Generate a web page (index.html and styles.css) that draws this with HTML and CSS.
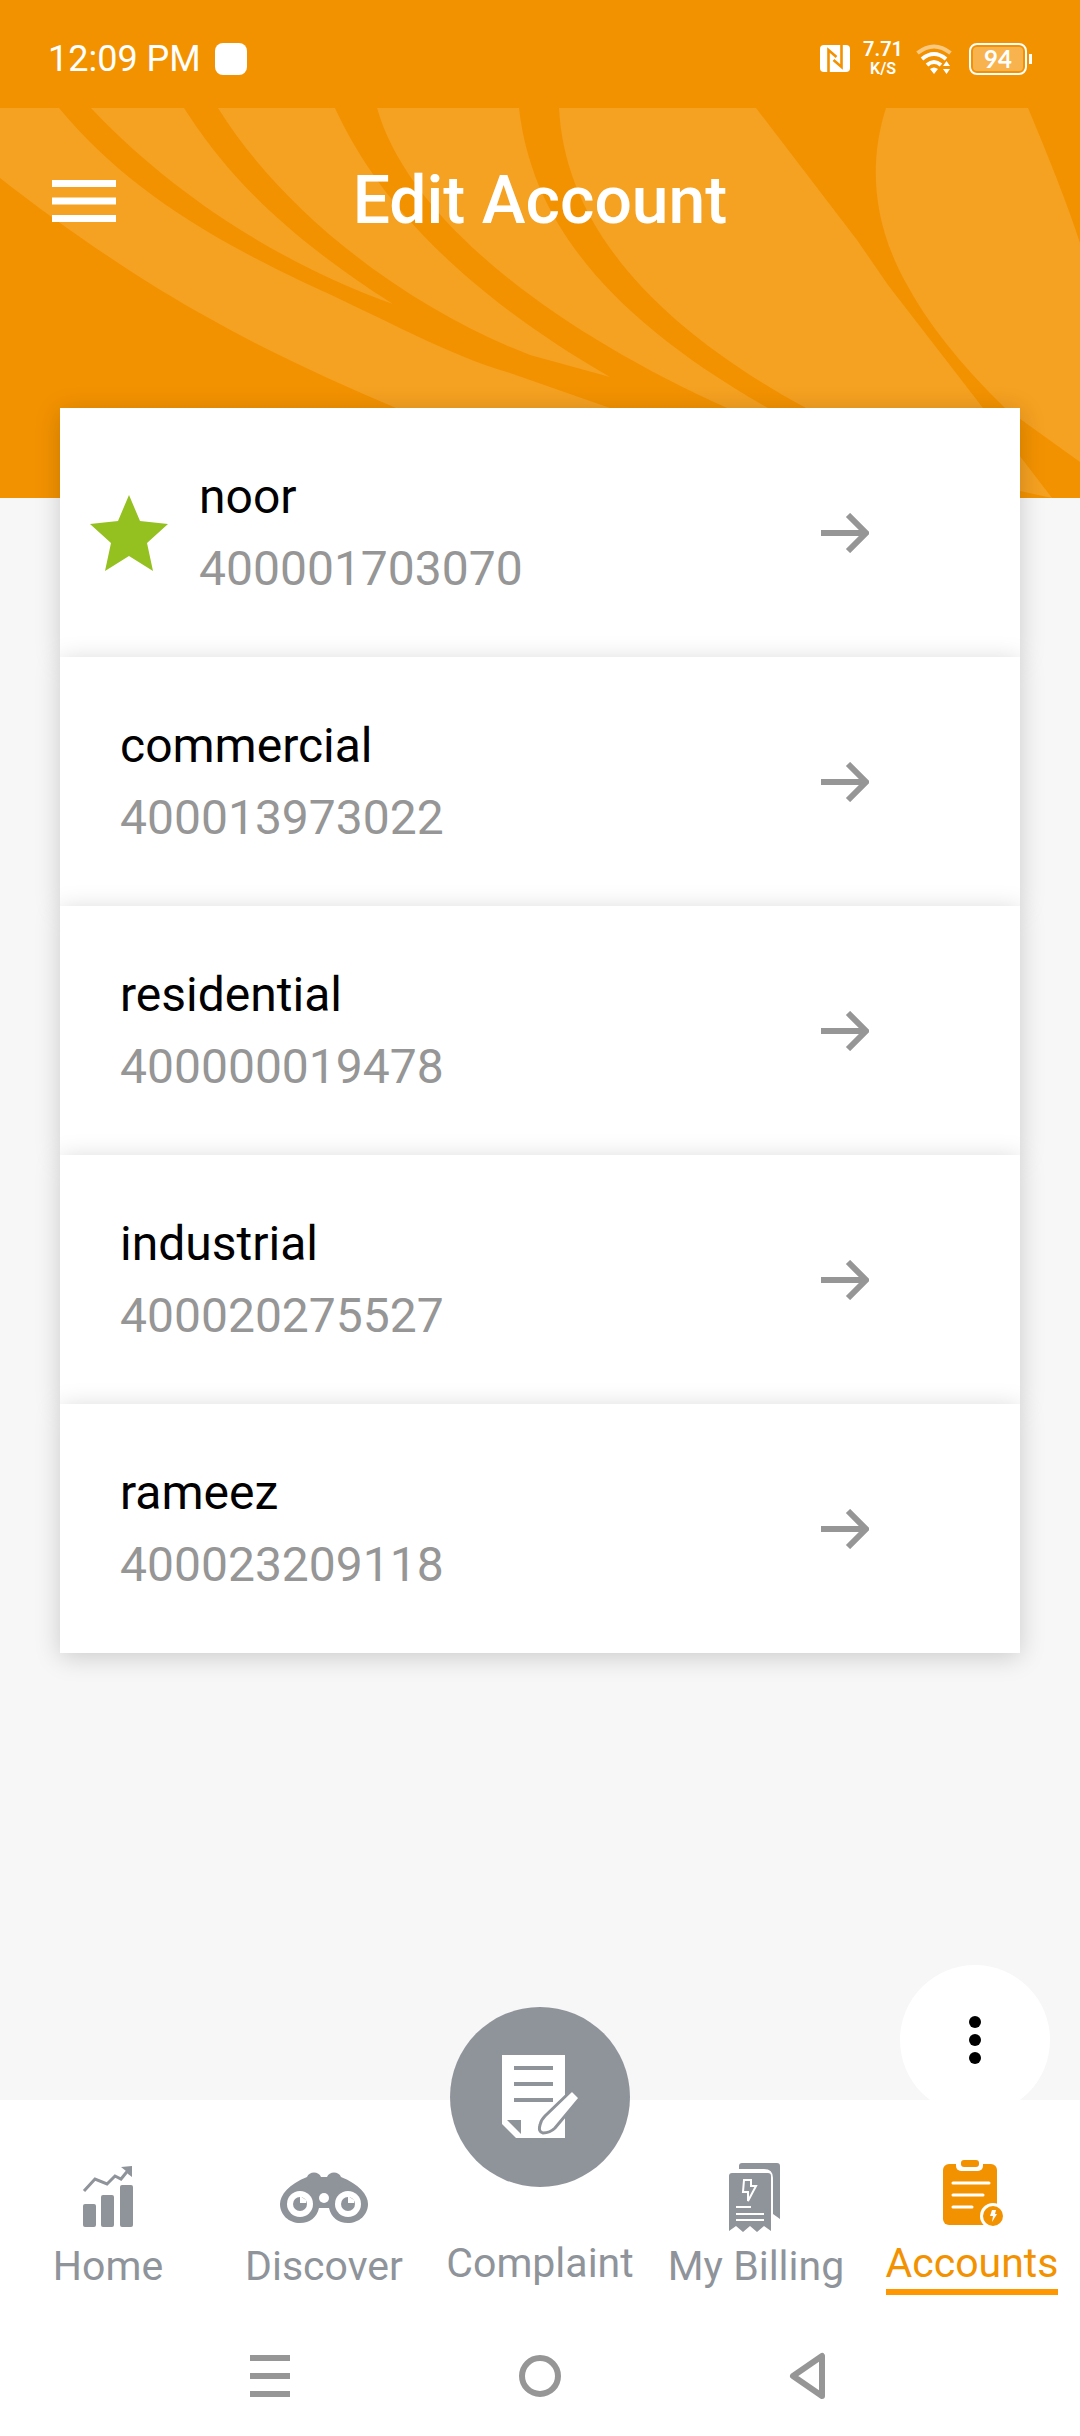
FILE: index.html
```
<!DOCTYPE html>
<html lang="en">
<head>
  <meta charset="UTF-8" />
  <meta name="viewport" content="width=device-width, initial-scale=1.0"/>
  <title>Edit Account</title>
  <link rel="stylesheet" href="styles.css">
</head>
<body>
  <header class="header">
    <!-- Phone status bar -->
    <div class="status-bar">
      <div class="status-left">
        <span class="time">12:09 PM</span>
        <span class="notice"></span>
      </div>
      <div class="status-right">
        <svg class="nfc" width="30" height="27" viewBox="0 0 30 27" aria-hidden="true">
          <rect width="30" height="27" rx="4" fill="#fff"/>
          <path d="M8.500 27V5l8 7M21.500 0v22l-8-7" fill="none" stroke="#f39200" stroke-width="2.600"/>
        </svg>
        <div class="speed"><span>7.71</span><small>K/S</small></div>
        <svg class="wifi" width="36" height="30" viewBox="0 0 36 30" aria-hidden="true">
          <g fill="none" stroke="#fff" stroke-width="4">
            <path d="M1.500 9Q18-4 34.500 9" opacity=".5"/>
            <path d="M6 15Q18 5 30 15"/>
            <path d="M11 21Q18 15 25 21"/>
          </g>
          <path d="M14 25q4-3 8 0l-4 5zM27 22l3.500-5 3.500 5zM27 25h7l-3.500 5z" fill="#fff"/>
        </svg>
        <div class="battery"><span>94</span></div>
      </div>
    </div>

    <div class="hero">
      <svg class="swirls" viewBox="0 0 1080 390" preserveAspectRatio="none" aria-hidden="true">
        <g fill="#f5a121">
          <path d="M0 0H59C115 67 185 118 303 174C385 211 450 248 510 265L610 300H396C340 276 270 245 207 209C150 178 70 125 0 70Z"/>
          <path d="M91 0H184C215 48 265 115 393 196C310 167 190 105 91 0Z"/>
          <path d="M218 0H335C365 65 430 165 610 269L530 247C420 205 290 115 218 0Z"/>
          <path d="M377 0H519C532 115 610 210 768 300H727C560 225 410 115 377 0Z"/>
          <path d="M559 0H756L857 132L888 177L983 300L1052 390L1020 383C900 360 850 325 806 300C650 215 565 115 559 0Z"/>
          <path d="M886 0H1028C1049 50 1067 95 1080 135V354L1005 300Q938 235 906 175C870 110 870 50 886 0Z"/>
        </g>
      </svg>
      <div class="app-bar">
        <button class="menu" type="button" aria-label="Menu">
          <svg width="64" height="42" viewBox="0 0 64 42"><path d="M0 0h64v7H0zM0 17.500h64v7H0zM0 35h64v7H0z" fill="#fff"/></svg>
        </button>
        <h1>Edit Account</h1>
      </div>
    </div>
  </header>

  <main class="content">
    <!-- Account list, the star marks the default account -->
    <ul class="accounts">
      <li>
        <a class="account favourite" href="#noor">
          <svg class="star" width="78" height="76" viewBox="0 0 78 76"><path d="M39 0L50 26 78 29 57 48 63 76 39 61 15 76 21 48 0 29 28 26z" fill="#94c11f"/></svg>
          <span class="details"><span class="name">noor</span><span class="number">400001703070</span></span>
          <svg class="arrow" width="48" height="40" viewBox="0 0 48 40"><path d="M0 20h44M27 2l18 18-18 18" fill="none" stroke="#969696" stroke-width="6"/></svg>
        </a>
      </li>
      <li>
        <a class="account" href="#commercial">
          <span class="details"><span class="name">commercial</span><span class="number">400013973022</span></span>
          <svg class="arrow" width="48" height="40" viewBox="0 0 48 40"><path d="M0 20h44M27 2l18 18-18 18" fill="none" stroke="#969696" stroke-width="6"/></svg>
        </a>
      </li>
      <li>
        <a class="account" href="#residential">
          <span class="details"><span class="name">residential</span><span class="number">400000019478</span></span>
          <svg class="arrow" width="48" height="40" viewBox="0 0 48 40"><path d="M0 20h44M27 2l18 18-18 18" fill="none" stroke="#969696" stroke-width="6"/></svg>
        </a>
      </li>
      <li>
        <a class="account" href="#industrial">
          <span class="details"><span class="name">industrial</span><span class="number">400020275527</span></span>
          <svg class="arrow" width="48" height="40" viewBox="0 0 48 40"><path d="M0 20h44M27 2l18 18-18 18" fill="none" stroke="#969696" stroke-width="6"/></svg>
        </a>
      </li>
      <li>
        <a class="account" href="#rameez">
          <span class="details"><span class="name">rameez</span><span class="number">400023209118</span></span>
          <svg class="arrow" width="48" height="40" viewBox="0 0 48 40"><path d="M0 20h44M27 2l18 18-18 18" fill="none" stroke="#969696" stroke-width="6"/></svg>
        </a>
      </li>
    </ul>
  </main>

  <nav class="tabs">
    <button class="more" type="button" aria-label="More options">
      <svg width="12" height="48" viewBox="0 0 12 48"><circle cx="6" cy="6" r="6"/><circle cx="6" cy="24" r="6"/><circle cx="6" cy="42" r="6"/></svg>
    </button>

    <a class="tab" href="#home">
      <svg width="96" height="72" viewBox="0 0 96 72">
        <g fill="#8f949b">
          <rect x="23" y="44" width="13" height="23" rx="2"/>
          <rect x="41" y="35" width="13" height="32" rx="2"/>
          <rect x="60" y="25" width="13" height="42" rx="2"/>
          <path d="M61 7l11-1v11l-4-3-2-3z"/>
        </g>
        <path d="M24 31L35 19l12 5 8-8 6 3 9-11" fill="none" stroke="#8f949b" stroke-width="3"/>
      </svg>
      <span>Home</span>
    </a>
    <a class="tab" href="#discover">
      <svg width="96" height="72" viewBox="0 0 96 72">
        <path d="M4 44c0-9 9-20 27-27 2-6 12-6 14 0h6c2-6 12-6 14 0 18 7 27 18 27 27 0 11-9 19-20 19-10 0-17-6-19-15H43c-2 9-9 15-19 15C13 63 4 55 4 44z" fill="#8f949b"/>
        <g fill="#fff">
          <circle cx="24" cy="44" r="13"/>
          <circle cx="72" cy="44" r="13"/>
          <circle cx="48" cy="38" r="5"/>
        </g>
        <g fill="#8f949b">
          <circle cx="24" cy="44" r="7"/>
          <circle cx="72" cy="44" r="7"/>
        </g>
        <path d="M24 43v-7l6 4v3zM72 43v-7l6 4v3z" fill="#fff"/>
      </svg>
      <span>Discover</span>
    </a>
    <a class="tab complaint" href="#complaint">
      <span class="bubble">
        <svg width="78" height="84" viewBox="0 0 78 84">
          <path d="M1 0h63v83H15L1 69z" fill="#fff"/>
          <path d="M6 65h14v14z" fill="#8f949b"/>
          <path d="M13 13h39M13 29h39M13 45h39" stroke="#8f949b" stroke-width="4"/>
          <path d="M71 35l8 8-25 30q-5 5-12 5-5-1-3-8 1-5 5-9z" fill="#fff" stroke="#8f949b" stroke-width="3"/>
        </svg>
      </span>
      <span>Complaint</span>
    </a>
    <a class="tab" href="#billing">
      <svg width="96" height="72" viewBox="0 0 96 72">
        <g fill="#8f949b">
          <path d="M31 9V6q0-3 3-3h35q3 0 3 3v53l-7-5V18q0-9-9-9z"/>
          <path d="M21 71V16q0-3 3-3h36q3 0 3 3v55l-7-5-7 6-7-6-7 6-7-6z"/>
        </g>
        <g fill="none" stroke="#fff" stroke-width="2">
          <path d="M36 20h7v6h5l-8 15v-9h-5z"/>
          <path d="M28 47h15M28 54h28M28 60h28"/>
        </g>
      </svg>
      <span>My Billing</span>
    </a>
    <a class="tab active" href="#accounts" aria-current="page">
      <svg width="96" height="72" viewBox="0 0 96 72">
        <rect x="19" y="7" width="54" height="61" rx="6" fill="#f39200"/>
        <rect x="32" y="0" width="27" height="14" rx="5" fill="#fff"/>
        <rect x="37" y="3" width="18" height="7" rx="3" fill="#f39200"/>
        <path d="M29 26h36M29 38h30M29 50h19" stroke="#fff" stroke-width="3" stroke-linecap="round"/>
        <circle cx="69" cy="59" r="13" fill="#fff"/>
        <circle cx="69" cy="59" r="10" fill="#f39200"/>
        <path d="M68 53h4l-1 4h2l-5 8 1-6h-3z" fill="#fff"/>
      </svg>
      <span>Accounts</span>
    </a>
  </nav>

  <!-- Phone navigation keys -->
  <div class="system-keys">
    <button type="button" aria-label="Recent apps">
      <svg width="48" height="48" viewBox="0 0 48 48"><path d="M4 3h40v6H4zM4 21h40v6H4zM4 39h40v6H4z" fill="#969696"/></svg>
    </button>
    <button type="button" aria-label="Home screen">
      <svg width="48" height="48" viewBox="0 0 48 48"><circle cx="24" cy="24" r="18" fill="none" stroke="#969696" stroke-width="6"/></svg>
    </button>
    <button type="button" aria-label="Back">
      <svg width="48" height="48" viewBox="0 0 48 48"><path d="M36 4v40L7 24z" fill="none" stroke="#969696" stroke-width="6" stroke-linejoin="round"/></svg>
    </button>
  </div>
</body>
</html>
```
FILE: styles.css
```
* { box-sizing: border-box; }
body { margin: 0; min-height: 100vh; display: flex; flex-direction: column; font-family: Roboto, sans-serif; background: #f7f7f7; color: #000; }
button { padding: 0; border: none; background: none; cursor: pointer; }
a { color: inherit; text-decoration: none; }
svg { display: block; flex: none; }

/* Header */
.header { background: #f39200; color: #fff; }
.status-bar { display: flex; justify-content: space-between; align-items: center; height: 108px; padding: 9px 53px 0 48px; }
.status-left, .status-right { display: flex; align-items: center; }
.status-left { gap: 14px; }
.time { font-size: 36px; line-height: 42px; }
.notice { width: 32px; height: 32px; border-radius: 8px; background: #fff; }
.status-right { gap: 13px; }
.speed { display: flex; flex-direction: column; align-items: center; font-size: 20px; line-height: 20px; font-weight: 600; }
.speed small { font-size: 16px; }
.wifi { margin-right: 4px; }
.battery { position: relative; width: 58px; height: 32px; padding: 2px; border: 2px solid #fff; border-radius: 8px; }
.battery span { display: block; border-radius: 4px; background: #f8b34e; font: bold 24px/24px Lato, sans-serif; text-align: center; }
.battery::after { content: ""; position: absolute; right: -7px; top: 9px; width: 3px; height: 10px; background: #fff; }
.hero { position: relative; height: 390px; }
.swirls { position: absolute; inset: 0; width: 100%; height: 100%; }
.app-bar { position: relative; display: grid; grid-template-columns: 1fr auto 1fr; align-items: center; height: 186px; padding: 0 52px; }
h1 { margin: 0; font-size: 66px; line-height: 84px; font-weight: 500; }

/* Account list */
.content { flex: 1; padding: 0 60px; }
.accounts { position: relative; list-style: none; margin: -90px 0 0; padding: 0; }
.accounts li { background: #fff; box-shadow: 0 4px 24px rgba(0, 0, 0, .18); }
.account { display: flex; align-items: center; gap: 31px; height: 249px; padding: 0 151px 0 60px; }
.account.favourite { padding-left: 30px; }
.details { flex: 1; display: flex; flex-direction: column; font-size: 48px; line-height: 72px; }
.number { color: #969696; }

/* Bottom tabs */
.tabs { position: relative; display: grid; grid-template-columns: repeat(5, 1fr); height: 216px; background: #fff; color: #8f949b; }
.tab { display: flex; flex-direction: column; align-items: center; justify-content: flex-end; gap: 10px; padding-bottom: 26px; font-size: 41px; line-height: 48px; white-space: nowrap; }
.tab.active { padding-bottom: 21px; color: #f39200; }
.tab.active span { padding-bottom: 2px; border-bottom: 6px solid #ff9800; }
.tab.complaint { position: relative; padding-bottom: 29px; }
.bubble { position: absolute; top: -93px; left: 50%; margin-left: -90px; width: 180px; height: 180px; display: flex; align-items: center; justify-content: center; border-radius: 50%; background: #8f949b; }
.more { position: absolute; top: -135px; right: 30px; width: 150px; height: 150px; display: flex; align-items: center; justify-content: center; border-radius: 50%; background: #fff; }

/* System keys */
.system-keys { display: grid; grid-template-columns: repeat(3, 1fr); justify-items: center; height: 120px; padding: 0 12.5%; background: #fff; }
```
